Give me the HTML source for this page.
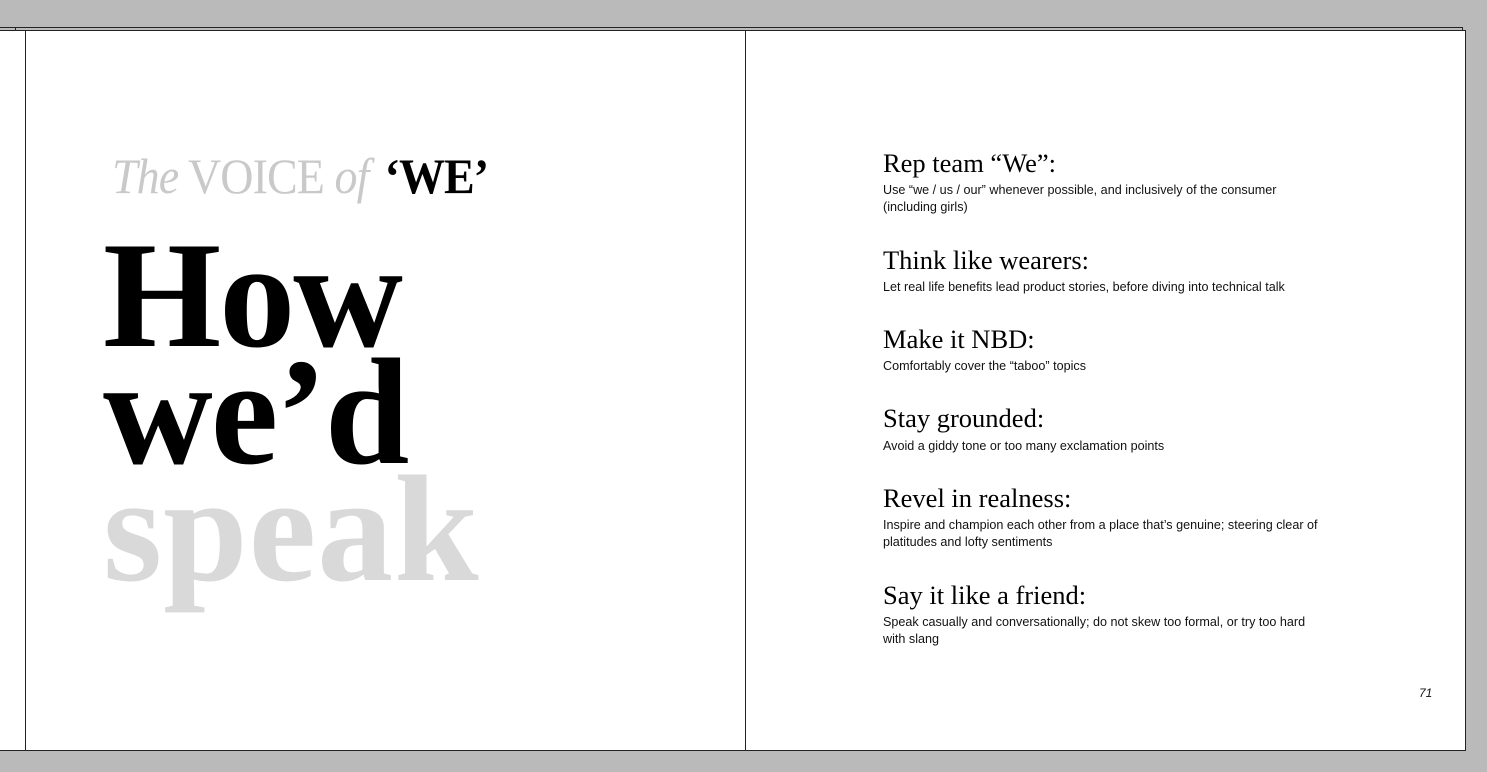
<!DOCTYPE html>
<html><head><meta charset="utf-8"><style>
html,body{margin:0;padding:0;}
body{width:1487px;height:772px;background:#bababa;position:relative;overflow:hidden;font-family:"Liberation Sans",sans-serif;}
.abs{position:absolute;}
.page{position:absolute;left:0;top:30px;width:1465px;height:720px;background:#fff;border-bottom:1px solid #222;}
.vl{position:absolute;width:1px;background:#222;}
.hl{position:absolute;height:1px;background:#222;}
.big{position:absolute;left:103px;top:237px;font-family:"Liberation Serif",serif;font-weight:bold;font-size:152px;line-height:117px;letter-spacing:-2px;color:#000;}
.sub{position:absolute;left:112px;top:151px;font-family:"Liberation Serif",serif;font-size:50px;line-height:50px;color:#c9c9c9;transform:scaleX(0.92);transform-origin:left top;white-space:nowrap;letter-spacing:-1px;}
.h{position:absolute;left:883px;font-family:"Liberation Serif",serif;font-size:26.5px;line-height:26px;color:#000;white-space:nowrap;}
.b{position:absolute;left:883px;font-size:12.6px;line-height:17px;color:#111;width:480px;}
</style></head><body>
<div class="page"></div>
<div class="hl" style="left:0;top:27px;width:1462px;"></div>
<div class="hl" style="left:0;top:30px;width:1466px;"></div>
<div class="vl" style="left:1462px;top:27px;height:4px;"></div>
<div class="vl" style="left:15px;top:27px;height:4px;"></div>
<div class="vl" style="left:25px;top:30px;height:721px;"></div>
<div class="vl" style="left:745px;top:30px;height:721px;"></div>
<div class="vl" style="left:1465px;top:30px;height:721px;"></div>

<div class="sub"><i>The</i> VOICE <i>of</i> <span style="color:#000;font-weight:bold;margin-left:6px">‘WE’</span></div>
<div class="big">How<br>we’d<br><span style="color:#d9d9d9;letter-spacing:1px">speak</span></div>

<div class="h" style="top:150px">Rep team “We”:</div>
<div class="b" style="top:182px">Use “we / us / our” whenever possible, and inclusively of the consumer<br>(including girls)</div>
<div class="h" style="top:247px">Think like wearers:</div>
<div class="b" style="top:279px">Let real life benefits lead product stories, before diving into technical talk</div>
<div class="h" style="top:326px">Make it NBD:</div>
<div class="b" style="top:358px">Comfortably cover the “taboo” topics</div>
<div class="h" style="top:405px">Stay grounded:</div>
<div class="b" style="top:438px">Avoid a giddy tone or too many exclamation points</div>
<div class="h" style="top:485px">Revel in realness:</div>
<div class="b" style="top:517px">Inspire and champion each other from a place that’s genuine; steering clear of<br>platitudes and lofty sentiments</div>
<div class="h" style="top:582px">Say it like a friend:</div>
<div class="b" style="top:614px">Speak casually and conversationally; do not skew too formal, or try too hard<br>with slang</div>
<div class="abs" style="left:1419px;top:686px;font-size:12px;font-style:italic;color:#111;">71</div>
</body></html>
